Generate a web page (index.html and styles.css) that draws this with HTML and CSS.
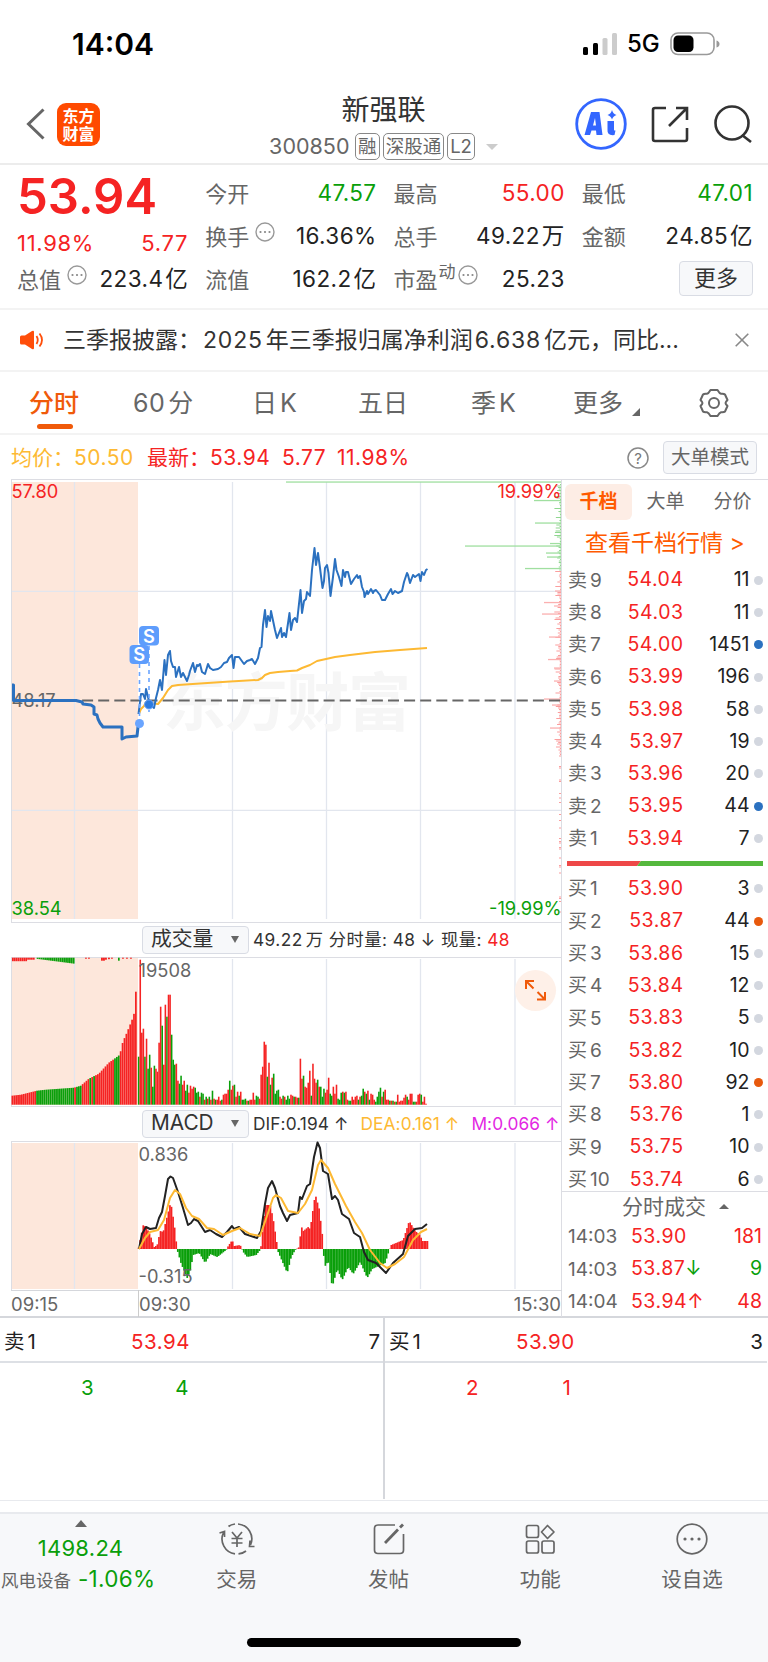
FILE: index.html
```html
<!DOCTYPE html>
<html lang="zh-CN">
<head>
  <meta charset="UTF-8">
  <meta name="viewport" content="width=device-width, initial-scale=1.0">
  <title>新强联 300850</title>
  <link rel="stylesheet" href="styles.css">
</head>
<body>
  <div class="status">
    <span class="clock">14:04</span>
    <div class="status-right">
      <svg width="34" height="24" viewBox="0 0 34 24">
        <rect x="0" y="15" width="5" height="8" rx="1.5"/>
        <rect x="10" y="11" width="5" height="12" rx="1.5"/>
        <rect x="19.500" y="6" width="5" height="17" rx="1.500" fill="#ccc"/>
        <rect x="29" y="1" width="5" height="22" rx="1.5" fill="#ccc"/>
      </svg>
      <span class="net">5G</span>
      <svg width="50" height="24" viewBox="0 0 50 24">
        <rect x="1" y="1" width="43" height="21.500" rx="7" fill="none" stroke="#999" stroke-width="1.600"/>
        <rect x="3.500" y="3.500" width="20" height="16.500" rx="4.500"/>
        <path d="M46.500 8.500 Q49.500 9.500 49.500 12 T46.500 15.500Z" fill="#999"/>
      </svg>
    </div>
  </div>

  <div class="header">
    <svg class="back" width="20" height="32" viewBox="0 0 20 32"><path d="M17.500 1.500 L2.500 16 L17.500 30.500" fill="none" stroke="#666" stroke-width="3"/></svg>
    <div class="logo">东方<br>财富</div>
    <div class="title">
      <h1>新强联</h1>
      <div class="sub">
        <span class="code">300850</span>
        <span class="tag">融</span><span class="tag">深股通</span><span class="tag">L2</span>
        <i class="caret"></i>
      </div>
    </div>
    <div class="tools">
      <svg width="52" height="52" viewBox="0 0 52 52" fill="#36f">
        <circle cx="26" cy="26" r="24.300" fill="none" stroke="#36f" stroke-width="2.800"/>
        <path d="M16 14 H24.500 L27.500 37 H21.500 L21 32.500 H16.500 L15 37 H9.500 Z M20 20 L18 27.500 H21 Z" fill-rule="evenodd"/>
        <path d="M32.500 23 H39 V31 Q38.500 33 40.500 32.500 L39.500 37 Q32 38 32.500 32 Z M37 12 Q38 16 41.500 17 Q38 18 37 21.500 Q36 18 32.500 17 Q36 16 37 12Z"/>
      </svg>
      <svg width="38" height="38" viewBox="0 0 38 38" fill="none" stroke="#333" stroke-width="2.600">
        <path d="M15 3 H4 Q2 3 2 5 V34 Q2 36 4 36 H34 Q36 36 36 34 V23 M25 3 H36 V15 M36 3 L18 21"/>
      </svg>
      <svg width="40" height="40" viewBox="0 0 40 40" fill="none" stroke="#333" stroke-width="2.600">
        <circle cx="19" cy="19" r="16.500"/><path d="M29 31 L38 38"/>
      </svg>
    </div>
  </div>

  <div class="quote">
    <div class="col">
      <div class="price">53.94</div>
      <div class="pair change"><span>11.98%</span><span>5.77</span></div>
      <div class="pair"><label>总值<svg class="dots"><use href="#dots"/></svg></label><b>223.4<u>亿</u></b></div>
    </div>
    <div class="col">
      <div class="pair"><label>今开</label><b class="down">47.57</b></div>
      <div class="pair"><label>换手<svg class="dots"><use href="#dots"/></svg></label><b>16.36%</b></div>
      <div class="pair"><label>流值</label><b>162.2<u>亿</u></b></div>
    </div>
    <div class="col">
      <div class="pair"><label>最高</label><b class="up">55.00</b></div>
      <div class="pair"><label>总手</label><b>49.22<u>万</u></b></div>
      <div class="pair"><label>市盈<small>动</small><svg class="dots"><use href="#dots"/></svg></label><b>25.23</b></div>
    </div>
    <div class="col">
      <div class="pair"><label>最低</label><b class="down">47.01</b></div>
      <div class="pair"><label>金额</label><b>24.85<u>亿</u></b></div>
      <div class="pair end"><button class="more">更多</button></div>
    </div>
  </div>

  <div class="news">
    <svg width="24" height="20" viewBox="0 0 24 20">
      <path d="M0 7 Q0 5.500 1.500 5.500 H5 L12 1 Q14 0 14 2 V18 Q14 20 12 19 L5 14.500 H1.500 Q0 14.500 0 13Z" fill="#ff4e0a"/>
      <path d="M16.500 6 Q19 10 16.500 14 M19.500 3.500 Q24.500 10 19.500 16.500" fill="none" stroke="#ff4e0a" stroke-width="1.800"/>
    </svg>
    <p>三季报披露：<span>2025</span><u>年三季报归属净利润</u><span>6.638</span><u>亿元，同比...</u></p>
    <svg width="14" height="14" viewBox="0 0 14 14"><path d="M.7 .7 L13.300 13.300 M13.300 .7 L.7 13.300" stroke="#888" stroke-width="1.600"/></svg>
  </div>

  <div class="tabs">
    <span class="active">分时</span>
    <span>60<u>分</u></span>
    <span>日<u>K</u></span>
    <span>五日</span>
    <span>季<u>K</u></span>
    <span>更多<i class="corner"></i></span>
    <svg width="30" height="30" viewBox="0 0 30 30" fill="none" stroke="#666" stroke-width="2">
      <path d="M11.500 2 H18.500 Q20.500 5.500 22 5.800 Q25 5.500 26 6.500 L28.500 12 Q26.500 14 26.500 15 T28.500 18 L26 23.500 Q25 24.500 22 24.200 Q20.500 24.500 18.500 28 H11.500 Q9.500 24.500 8 24.200 Q5 24.500 4 23.500 L1.500 18 Q3.500 16 3.500 15 T1.500 12 L4 6.500 Q5 5.500 8 5.800 Q9.500 5.500 11.500 2Z" stroke-linejoin="round"/>
      <circle cx="15" cy="15" r="5"/>
    </svg>
  </div>

  <div class="latest">
    <span class="avg">均价：</span><span class="avg n1">50.50</span>
    <span class="up">最新：</span><span class="up n2">53.94</span><span class="up n3">5.77</span><span class="up n4">11.98%</span>
    <svg class="help" width="22" height="22" viewBox="0 0 22 22"><circle cx="11" cy="11" r="10" fill="none" stroke="#888" stroke-width="1.500"/><text x="11" y="16.500" text-anchor="middle" font-size="15" fill="#777">?</text></svg>
    <button class="mode">大单模式</button>
  </div>

  <div class="market">
    <div class="charts">
      <svg class="chart" width="551" height="443" viewBox="11 479 551 443">
        <rect x="11" y="482" width="127" height="437" fill="#fde7db"/>
        <path class="grid" d="M74.500 482V919 M232.500 482V919 M326.500 482V919 M420.500 482V919 M515 482V919 M11 591.300H561 M11 810.300H561"/>
        <path class="frame" d="M11.500 479V922"/>
        <text class="watermark" x="163" y="725" textLength="248" lengthAdjust="spacing">东方财富</text>
        <g id="depth"></g>
        <text class="grey" x="11.500" y="706.500">48.17</text>
        <path d="M66 700.500H561" stroke="#666" stroke-width="2" stroke-dasharray="11 5.100" fill="none"/>
        <path class="avg-line" d="M139 714L141 709 144 706 146 702 150 703 158 704 163 698 168 690 172 686 178 685 200 683.500 230 681.500 258 680 262 678 265 675 270 673 278 672 290 671 297 670.500 302 668 310 665 317 661 326 659 335 657 350 655 375 652 400 650 427 648"/>
        <path class="pre-line" d="M12 685H13.500V700.500H76L82 702 83 704 91 705 94 707V714L97 715 98 719 100 723 103 727H122V739L126 737 137 736 138 727"/>
        <path class="price-line" d="M138.500 714L140 702 141 694 143 694 145 699 146 689 148 697 150 705 154 708 156 698 158 690 160 680 162 690 164.500 660 166 675 168 655 170 651 171 661 173 667 175 667 176 677 179 667 181 677 183 673 187 681 189 675 190 671 193 663 195 672 197 665 198 666 200 664 202 672 205 674 208 664 210 668 213 670 218 669 221 667 224 663 227 662 229 658 232 655 233.500 668 235 657 239 657 244 664 247 661 250 660 252 659 255 664 258 658 260 648 261.500 647 263 625 265 610 266.500 627 268 616 270 621 271 611 275 630 277 638 281 628 282 637 284 633 286 637 289.500 613 291 630 293 620 295 618 297 622 300.500 590 302 613 304 601 306 599 307 592 310 596 312 570 314.500 548 316 565 318 553 320 568 322.500 588 324 581 325 568 327 565 328.500 573 330.500 596 333 577 335 559 336.500 570 339 577 341.500 586 343 570 345 577 346 572 348 572 351 584 354 579 357 575 358 578 360 576 362 587 364 592 364.500 597 367 591 368 594 371 589 373 593 374 591 376 590 380 595 382 600 385 600 388 594 391 589 392.500 594 395 591 398 593 402 591 404 582 407 573 408 575 410 583 413 575 415 577 419 574 420.500 581 422 572 424 575 426 570 427.500 569"/>
        <path d="M139.500 664V723 M149 646V712" stroke="#6aa5ff" stroke-width="1.600" stroke-dasharray="4 4"/>
        <circle cx="139.500" cy="723.500" r="4.500" fill="#6aa5ff"/>
        <circle cx="149" cy="704.500" r="4.500" fill="#2c7be0" stroke="#6aa5ff"/>
        <rect x="129.500" y="645" width="19.500" height="19" rx="4" fill="#5e9dfc"/>
        <text class="mark" x="139.300" y="661.200">S</text>
        <rect x="139" y="626" width="20" height="19.500" rx="4" fill="#5e9dfc"/>
        <text class="mark" x="149" y="642.500">S</text>
        <text class="up" x="11.500" y="497.500">57.80</text>
        <text class="up" x="561.500" y="497.500" text-anchor="end">19.99%</text>
        <text class="down" x="11.500" y="915">38.54</text>
        <text class="down" x="561.500" y="915" text-anchor="end">-19.99%</text>
      </svg>

      <div class="bar vol">
        <button class="select">成交量<i></i></button>
        <span>49.22<u>万</u> 分时量: 48 ↓ 现量: <em class="up">48</em></span>
      </div>

      <svg class="chart" width="551" height="149" viewBox="11 957 551 149">
        <rect x="11" y="958" width="127" height="147" fill="#fde7db"/>
        <path class="grid" d="M74.500 959V1105 M232.500 959V1105 M326.500 959V1105 M420.500 959V1105 M515 959V1105"/>
        <path class="frame" d="M11.500 957V1106"/>
        <g id="volume"></g>
        <text class="grey" x="138.500" y="976.500">19508</text>
        <circle cx="535.500" cy="990.500" r="20.500" fill="#fef0e8"/>
        <path d="M526 989V981H534 M526.500 981.500L533.500 988.500 M545 992V999.500H537 M544.500 999L537.500 992" fill="none" stroke="#f05a0a" stroke-width="2"/>
      </svg>

      <div class="bar macd">
        <button class="select">MACD<i></i></button>
        <span>DIF:0.194 ↑</span><span class="avg">DEA:0.161 ↑</span><span class="m">M:0.066 ↑</span>
      </div>

      <svg class="chart" width="551" height="149" viewBox="11 1141 551 149">
        <rect x="11" y="1143" width="127" height="146" fill="#fde7db"/>
        <path class="grid" d="M74.500 1143V1289 M232.500 1143V1289 M326.500 1143V1289 M420.500 1143V1289 M515 1143V1289"/>
        <path class="frame" d="M11.500 1141V1290"/>
        <g id="macd"></g>
        <text class="grey" x="138.500" y="1161">0.836</text>
        <text class="grey" x="138.500" y="1283">-0.315</text>
        <path class="dif-line" d="M139 1249L142 1234 146 1227 150 1229 156 1228 159 1218 162 1212 165 1196 168 1179 170.500 1176.500 173 1178 178 1192 183 1208 188 1225 191 1223 194 1219 198 1221 205 1232 210 1230 216 1234 222 1237 227 1232 232 1226 234 1229 239 1227 245 1234 257 1238 261 1231 265 1204 268 1188 272 1181 275 1188 280 1206 283 1213 287 1221 290 1215 298 1213 300 1197 302 1199 307 1186 310 1184 314 1157 317.500 1142.500 320 1148 323 1171 328 1174 332 1199 335 1196 338 1200 342 1214 349 1219 354 1233 360 1237 364 1252 368 1260 376 1263 386 1273 393 1263 403 1254 408 1236 415 1229 422 1228 427 1224"/>
        <path class="avg-line" d="M139 1249L145 1238 150 1232 158 1230 164 1220 170 1198 175 1190 180 1194 186 1208 192 1216 199 1219 207 1228 214 1229 223 1235 232 1231 240 1228 250 1234 260 1236 267 1216 273 1198 276 1195 281 1198 288 1211 298 1213 305 1204 312 1190 318 1165 321 1160 328 1168 335 1184 346 1206 355 1222 362 1233 370 1250 380 1263 387 1268 395 1264 404 1257 413 1240 421 1232 427 1229"/>
      </svg>

      <div class="times"><span>09:15</span><span class="open">09:30</span><span class="close">15:30</span></div>
    </div>

    <div class="book">
      <div class="book-tabs"><span class="active">千档</span><span>大单</span><span>分价</span></div>
      <div class="book-link">查看千档行情 &gt;</div>
      <div id="asks"></div>
      <div class="ratio"><svg width="196" height="5" viewBox="0 0 196 5"><path d="M0 0H74L70 5H0Z" fill="#ee4848"/><path d="M74 0H196V5H70Z" fill="#55b83d"/></svg></div>
      <div id="bids"></div>
      <div class="ticks-title">分时成交<i></i></div>
      <div class="tick"><label>14:03</label><b class="up">53.90</b><span class="up">181</span></div>
      <div class="tick"><label>14:03</label><b class="up">53.87<em class="down">↓</em></b><span class="down">9</span></div>
      <div class="tick"><label>14:04</label><b class="up">53.94<em>↑</em></b><span class="up">48</span></div>
    </div>
  </div>

  <div class="queue">
    <div class="side">
      <div class="queue-head"><label>卖<u>1</u></label><b class="up">53.94</b><span>7</span></div>
      <div class="orders down"><span>3</span><span>4</span></div>
    </div>
    <div class="side">
      <div class="queue-head"><label>买<u>1</u></label><b class="up">53.90</b><span>3</span></div>
      <div class="orders up"><span>2</span><span>1</span></div>
    </div>
  </div>

  <div class="footer">
    <div class="index">
      <i></i>
      <strong>1498.24</strong>
      <p>风电设备 <span>-1.06%</span></p>
    </div>
    <div class="action">
      <svg width="36" height="36" viewBox="0 0 36 36"><path d="M4.500 11.500 A15 15 0 0 0 16 32.800 M19.500 32.900 Q24 32.500 27 30 M31.500 24 A15 15 0 0 0 19 3 M16 3 Q12 3.500 9.500 5.500 M.5 12 L5.500 10.500 V16 M35.500 25.500 L30.500 25.500 L31 19.500 M13 11 L18 17 L23 11 M18 17 V26 M12.500 17.500 H23.500 M12.500 22 H23.500"/></svg>
      <span>交易</span>
    </div>
    <div class="action">
      <svg width="36" height="36" viewBox="0 0 36 36"><path d="M24 4 H7 Q3.500 4 3.500 7.500 V29 Q3.500 32.500 7 32.500 H29 Q32.500 32.500 32.500 29 V13"/><path d="M14 22 L27 8.500" stroke-width="2.800"/><path d="M29 6.500 L32 3.500" stroke-width="2.800"/></svg>
      <span>发帖</span>
    </div>
    <div class="action">
      <svg width="36" height="36" viewBox="0 0 36 36"><rect x="4.500" y="4.500" width="12" height="12" rx="2"/><rect x="4.500" y="20" width="12" height="12" rx="2"/><rect x="20" y="20" width="12" height="12" rx="2"/><path d="M25.500 4.500 L32 11 L25.500 17.500 L19.500 11Z" stroke-linejoin="round"/></svg>
      <span>功能</span>
    </div>
    <div class="action">
      <svg width="36" height="36" viewBox="0 0 36 36"><circle cx="18" cy="18" r="14.800"/><path d="M11 18h.01 M18 18h.01 M25 18h.01" stroke-width="3.200" stroke-linecap="round"/></svg>
      <span>设自选</span>
    </div>
    <div class="home"></div>
  </div>

  <svg class="defs">
    <symbol id="dots" viewBox="0 0 20 20">
      <circle cx="10" cy="10" r="9" fill="none" stroke="#999" stroke-width="1.400"/>
      <path d="M5.500 10h.01 M10 10h.01 M14.500 10h.01" stroke="#888" stroke-width="2.200" stroke-linecap="round"/>
    </symbol>
  </svg>
  <script src="script.js"></script>
</body>
</html>
```

FILE: styles.css
```css
* {
  box-sizing: border-box;
}
body {
  margin: 0;
  width: 768px;
  background: #fff;
  color: #333;
  font-family: Inter, "Noto Sans CJK SC", sans-serif;
  font-size: 22px;
  line-height: 1;
}
h1, p {
  margin: 0;
  font-weight: 400;
}
b, em, i {
  font-weight: 400;
  font-style: normal;
}
/* gap between latin and chinese text */
u {
  margin-left: 3px;
  text-decoration: none;
}
button {
  font-family: inherit;
  line-height: 1;
  padding: 0;
  background: #f7f8fa;
  border: 1px solid #d9dce4;
  border-radius: 4px;
  color: #333;
}
svg {
  display: block;
  flex: none;
}
.defs {
  display: none;
}
.up {
  color: #f52323;
  fill: #f52323;
}
.down {
  color: #0a9f0a;
  fill: #0a9f0a;
}
.avg {
  color: #fdb933;
}

/* status bar */
.status {
  display: flex;
  justify-content: space-between;
  align-items: center;
  height: 88px;
  padding: 0 48px 0 72px;
  color: #000;
}
.clock {
  font-size: 30px;
  font-weight: 600;
}
.status-right {
  display: flex;
  align-items: center;
}
.net {
  width: 53px;
  padding-left: 10px;
  font-size: 24px;
  font-weight: 500;
}

/* header */
.header {
  display: flex;
  align-items: center;
  height: 77px;
  padding: 0 15px 3px 26px;
  border-bottom: 2px solid #ececec;
}
.logo {
  width: 43px;
  height: 43px;
  margin-left: 11px;
  padding-top: 4px;
  border-radius: 9px;
  background: #ff4a00;
  color: #fff;
  font-size: 16px;
  font-weight: 700;
  line-height: 18px;
  text-align: center;
}
.title {
  width: 285px;
  margin-left: 141px;
  text-align: center;
}
h1 {
  font-size: 28px;
  line-height: 34px;
}
.sub {
  display: flex;
  align-items: center;
  justify-content: center;
  height: 28px;
  margin: 6px 0 -5px 0;
  color: #666;
}
.code {
  width: 86px;
  text-align: left;
  font-size: 21.500px;
}
.tag {
  height: 27px;
  margin-right: 3px;
  padding: 0 2px;
  border: 1.500px solid #888;
  border-radius: 5px;
  font-size: 18.500px;
  line-height: 24px;
}
.caret {
  margin-left: 8px;
  border: 6.500px solid transparent;
  border-top-color: #ccc;
  border-bottom: 0;
}
.tools {
  display: flex;
  align-items: center;
  gap: 24px;
  margin-left: auto;
}

/* quote */
.quote {
  display: flex;
  gap: 17px;
  height: 145px;
  padding: 7px 15px 0 17px;
  border-bottom: 2px solid #f3f3f3;
}
.col {
  flex: 1;
}
.pair {
  display: flex;
  justify-content: space-between;
  align-items: center;
  height: 43px;
  white-space: nowrap;
}
.col b {
  color: #222;
  font-size: 22.500px;
  letter-spacing: .4px;
}
.col b.up {
  color: #f52323;
}
.col b.down {
  color: #0a9f0a;
}
.col u {
  margin-left: 2px;
}
.pair label {
  display: flex;
  align-items: center;
  color: #666;
}
.pair small {
  margin: -14px 1px 0 1px;
  font-size: 17px;
}
.dots {
  width: 20px;
  height: 20px;
  margin: -9px 0 0 6px;
}
small + .dots {
  margin-left: 1px;
}
.price {
  height: 48px;
  color: #f52323;
  font-size: 49px;
  font-weight: 600;
  line-height: 50px;
}
.change {
  height: 38px;
  padding-top: 7px;
  color: #f52323;
  letter-spacing: .7px;
}
.pair.end {
  justify-content: flex-end;
}
.more {
  width: 74px;
  height: 35px;
  margin-top: -3px;
  font-size: 22px;
}

/* news */
.news {
  display: flex;
  align-items: center;
  height: 62px;
  padding: 0 19px 0 20px;
  border-bottom: 2px solid #f3f3f3;
}
.news p {
  margin-left: 19px;
  font-size: 23px;
}
.news p span {
  margin-left: 2px;
  letter-spacing: .8px;
}
.news svg:last-child {
  margin-left: auto;
}

/* period tabs */
.tabs {
  display: flex;
  align-items: center;
  height: 63px;
  padding: 1px 0 0 29px;
  border-bottom: 2px solid #f3f3f3;
  color: #666;
  font-size: 25px;
}
.tabs span {
  position: relative;
  width: 104px;
}
.tabs .active {
  color: #f05a0a;
  font-weight: 500;
}
.tabs .active::after {
  content: "";
  position: absolute;
  left: 8px;
  top: 33px;
  width: 36px;
  height: 5px;
  border-radius: 3px;
  background: #f05a0a;
}
.tabs span:nth-child(2) {
  letter-spacing: .5px;
}
.tabs span:nth-child(3) {
  padding-left: 15px;
}
.tabs span:nth-child(4) {
  padding-left: 17px;
}
.tabs span:nth-child(5) {
  padding-left: 26px;
}
.tabs span:nth-child(6) {
  width: 150px;
  padding-left: 24px;
}
.corner {
  display: inline-block;
  margin-left: 9px;
  border: 4px solid #666;
  border-top-color: transparent;
  border-left-color: transparent;
  vertical-align: -4px;
}

/* latest line */
.latest {
  display: flex;
  align-items: center;
  height: 44px;
  padding: 1px 11px 0;
  font-size: 21px;
}
.n1 {
  width: 73px;
}
.n2 {
  width: 72px;
}
.n3 {
  width: 55px;
}
.n1, .n2, .n3, .n4 {
  letter-spacing: .5px;
}
.help {
  margin-left: auto;
}
.mode {
  width: 94px;
  height: 33px;
  margin-left: 14px;
  color: #666;
  font-size: 19.500px;
}

/* charts */
.market {
  display: flex;
  height: 839px;
  border-bottom: 2px solid #d5d7dc;
}
.charts {
  width: 562px;
  padding-left: 11px;
}
.chart {
  box-shadow: inset 0 1px #dcdde3, inset -1px 0 #dcdde3;
  font-size: 18.300px;
}
.grid {
  stroke: #e2e6ee;
  stroke-width: 1.300;
  fill: none;
}
.frame {
  stroke: #dcdde3;
}
.grey {
  fill: #666;
}
.watermark {
  fill: #f6f6f6;
  font-size: 63px;
  font-weight: 700;
}
.mark {
  fill: #fff;
  font-weight: 600;
  text-anchor: middle;
}
.price-line, .pre-line, .avg-line, .dif-line {
  fill: none;
  stroke: #2b71c0;
  stroke-width: 2;
  stroke-linejoin: round;
}
.pre-line {
  stroke-width: 3;
}
.avg-line {
  stroke: #fdb933;
}
.dif-line {
  stroke: #222;
}
.bar {
  display: flex;
  align-items: center;
  height: 35px;
  padding: 1px 0 0 131px;
  box-shadow: inset 0 1px #dcdde3, inset -1px 0 #dcdde3;
  font-size: 17.300px;
  white-space: nowrap;
}
.vol span {
  letter-spacing: .45px;
}
.macd span {
  letter-spacing: .1px;
}
.select {
  display: flex;
  justify-content: space-between;
  align-items: center;
  width: 107px;
  height: 28px;
  margin: -1px 4px 0 0;
  padding: 0 9px 0 8px;
  font-size: 20.800px;
}
.select i {
  border: 4px solid transparent;
  border-top: 7px solid #666;
  border-bottom: 0;
}
.macd .avg {
  margin-left: 12px;
}
.m {
  margin-left: 12px;
  color: #e327e3;
}
.times {
  display: flex;
  height: 27px;
  box-shadow: inset 0 1px #d5d7dc, inset -1px 0 #dcdde3;
  color: #666;
  font-size: 18.500px;
  line-height: 29px;
}
.times span {
  width: 127px;
}
.times .open {
  flex: 1;
  border-left: 1px solid #ccc;
}
.times .close {
  width: auto;
  padding-right: 1px;
}

/* order book */
.book {
  width: 206px;
  padding-left: 3px;
  box-shadow: inset 0 1px #dcdde3;
}
.book-tabs {
  display: flex;
  padding-top: 5px;
  color: #666;
  font-size: 19px;
  line-height: 36px;
  text-align: center;
}
.book-tabs span {
  width: 67px;
}
.book-tabs .active {
  border-radius: 6px;
  background: #fdede5;
  color: #ff5a00;
  font-weight: 700;
}
.book-link {
  height: 44px;
  padding-left: 20px;
  color: #ff5a00;
  font-size: 23px;
  line-height: 47px;
}
.level, .tick {
  display: flex;
  align-items: center;
  height: 32.300px;
  padding-left: 3px;
  font-size: 19.500px;
}
.level label, .tick label {
  width: 58px;
  color: #666;
  font-size: 19px;
}
.level b, .tick b {
  width: 57.500px;
  text-align: right;
  letter-spacing: .5px;
}
.level span {
  width: 66px;
  text-align: right;
  color: #222;
}
.level i {
  width: 9px;
  height: 9px;
  margin-left: 4px;
  border-radius: 50%;
  background: #d3d7df;
}
.level .sold {
  background: #2b71c0;
}
.level .bought {
  background: #e8590c;
}
.ratio {
  height: 18px;
  padding: 6px 0 0 2px;
}
.ticks-title {
  display: flex;
  align-items: center;
  height: 30px;
  margin: -5px 0 0 -3px;
  padding-left: 60px;
  border-top: 1px solid #dcdde3;
  color: #666;
  font-size: 21px;
}
.ticks-title i {
  margin-left: 13px;
  border: 5px solid transparent;
  border-bottom-color: #666;
  border-top: 0;
}
.tick label {
  width: 63px;
}
.tick b {
  text-align: left;
}
.tick span {
  margin-left: auto;
  padding-right: 6px;
}

/* order queue */
.queue {
  display: flex;
  height: 183px;
  border-bottom: 1px solid #e8eaee;
}
.side {
  width: 384px;
  height: 181px;
}
.side + .side {
  border-left: 2px solid #d5d7dc;
  margin-left: -1px;
}
.queue-head {
  display: flex;
  align-items: center;
  height: 45px;
  padding: 5px 4px 0;
  border-bottom: 2px solid #dde0e5;
  font-size: 20.500px;
  color: #222;
}
.queue-head label {
  width: 127px;
}
.queue-head b {
  letter-spacing: .5px;
}
.queue-head span {
  margin-left: auto;
}
.orders {
  display: flex;
  height: 50px;
  align-items: center;
  padding-left: 40px;
  font-size: 20.500px;
}
.orders span {
  width: 94.500px;
  text-align: center;
}

/* footer */
.footer {
  display: flex;
  flex-wrap: wrap;
  align-content: flex-start;
  height: 150px;
  margin-top: 11px;
  border-top: 2px solid #e8eaee;
  background: #f7f8fa;
  color: #666;
}
.index {
  width: 161px;
  height: 124px;
  color: #0a9f0a;
  text-align: center;
}
.index i {
  display: block;
  width: 0;
  margin: 6px auto 8px 75px;
  border: 6.500px solid transparent;
  border-bottom: 7px solid #666;
  border-top: 0;
}
.index strong {
  display: block;
  font-size: 22px;
  font-weight: 400;
  letter-spacing: .3px;
  line-height: 27px;
}
.index p {
  padding-left: 1px;
  color: #666;
  font-size: 17.500px;
  line-height: 34px;
  text-align: left;
  white-space: nowrap;
}
.index p span {
  margin-left: 2px;
  color: #0a9f0a;
  font-size: 22.500px;
  letter-spacing: .3px;
}
.action {
  display: flex;
  flex-direction: column;
  align-items: center;
  width: 151.700px;
  padding-top: 7px;
  gap: 13px;
  font-size: 20.500px;
}
.action svg {
  fill: none;
  stroke: #666;
  stroke-width: 1.700;
}
.home {
  width: 274px;
  height: 9px;
  margin: 0 auto;
  border-radius: 5px;
  background: #000;
}
```

FILE: script.js
```javascript
const RED = '#f52323';
const GREEN = '#0a9f0a';

function bar(x, y, w, h, fill) {
  return `<rect x="${x}" y="${y}" width="${w}" height="${h}" fill="${fill}"/>`;
}

// value of a broken line at x
function at(points, x) {
  for (let i = 1; i < points.length; i++) {
    const [x0, y0] = points[i - 1];
    const [x1, y1] = points[i];
    if (x <= x1) return y0 + (y1 - y0) * (x - x0) / (x1 - x0);
  }
  return points[points.length - 1][1];
}

// volume, one bar per minute from 09:30
const volume = 'g48 r145 r72 r76 g48 r66 g36 g50 r37 g18 g39 r36 r33 r62 r98 g79 r40 r100 g88 r110 r110 g70 g45 g40 r41 r24 g21 g29 r20 r24 g14 g20 r12 r19 r16 r18 g17 g12 g13 r8 g12 g11 r5 g8 r6 g8 r5 g14 r6 g5 r5 r8 r4 g5 r10 r11 r11 r15 g24 r15 r19 g20 r8 r13 g9 r13 g5 g5 g6 r4 g4 r5 r5 r12 r5 g9 g8 r6 r30 r38 r63 r60 g28 r42 g20 r27 g31 g11 g14 g15 r8 r6 g9 r8 g5 g9 g6 r10 r9 g8 r8 r7 g7 r46 r26 g29 r18 r17 r22 r34 g9 r41 r26 r22 g25 r18 g18 g8 g16 r12 r15 r27 g11 g9 r18 r11 r20 g6 g5 g12 r13 g12 r13 r5 g4 g4 r8 r5 r8 r9 g5 r8 g9 g16 r13 g11 r14 g5 r11 r10 r5 g3 g8 g13 g17 r8 g13 r15 r5 r5 g4 r4 g4 r3 g3 r10 r3 r4 r4 r7 r10 g8 r5 r11 r11 g3 g3 r3 r10 r11 g10 r3 r8 r1'.split(' ');
let html = volume.map((v, i) => {
  const h = Number(v.slice(1));
  return bar(137.9 + i * 1.57, 1104.7 - h, 1.57, h, v[0] === 'r' ? RED : GREEN);
}).join('');

// call auction
const auction = [[11, 9], [20, 10], [36, 14], [45, 15], [73, 17], [80, 19], [88, 26], [98, 31], [108, 42], [115, 47], [119, 50], [122, 63], [126, 72], [132, 87], [134, 94], [135, 113], [137, 113]];
const auctionGreen = [[36, 72.5], [74.5, 80], [88, 90], [92, 94], [95.500, 97], [114, 119.5]];
for (let x = 11.500; x < 136; x += 1.9) {
  const h = at(auction, x);
  const green = auctionGreen.some(([a, b]) => x >= a && x < b);
  html += bar(x, 1104.7 - h, 1.75, h, green ? GREEN : RED);
}
for (let x = 12; x < 74; x += 1.9) {
  if (x < 34) html += bar(x, 957.7, 1.75, x < 27 ? 3.500 : 2, RED);
  if (x > 35) html += bar(x, 957.7, 1.75, 1 + (x - 35) * .13, GREEN);
}
[[85, 1], [88, 1], [101, 3], [103, 3], [105, 2], [108, 1.5], [111, 1], [122, 1], [126, 1], [130, 1]].forEach(([x, h]) => {
  html += bar(x, 957.7, 1.9, h, RED);
});
html += bar(118, 957.7, 1.7, 3, GREEN);
document.getElementById('volume').innerHTML = html;

// MACD histogram
const macd = [[138, 0], [143, 23.7], [146, 22], [150, 14], [154, 2], [157, 4], [160, 18], [163, 17], [170.5, 47], [174, 25], [176.5, 3], [177, -1], [181, -15], [187, -29], [190, -22], [193, -6], [199, -4], [205, -14], [210, -5], [217, -8], [226, -1], [228, 3], [232, 9], [234, 3], [240, 4], [243, -3], [247, -8], [256, -6], [260, -1], [261, 4], [265, 44], [270, 44], [273, 30], [276, 10], [278, -3], [287, -24], [291, -8], [295, -1], [299, 2], [301, 23], [303, 18], [308, 22], [310, 20], [315, 55], [319, 40], [322, 15], [323, -3], [325, -17], [328, -12], [332, -38], [337, -20], [342, -31], [348, -18], [353, -25], [360, -13], [367, -29], [372, -20], [385, -14], [389, -1], [391, 4], [403, 9], [409, 28], [415, 18], [420, 14], [422, 8], [429, 8]];
html = '';
for (let i = 0; i < 185; i++) {
  const x = 138.3 + i * 1.57;
  const v = at(macd, x);
  html += bar(x - .6, v > 0 ? 1249 - v : 1249, 1.7, Math.abs(v), v > 0 ? RED : GREEN);
}
document.getElementById('macd').innerHTML = html;

// pending orders along the right edge of the price chart
const depth = [[482, 275], [500.5, 27], [523, 26], [543.5, 11], [546, 96], [553, 15], [557, 14], [568.5, 36], [591, 6], [602.5, 17], [614, 19], [637, 12], [659.5, 13], [668, 7], [681, 7], [699, 17], [705, 9], [728, 11]];
html = '';
for (let y = 484; y < 915; y += 1.5) {
  const n = Math.abs(Math.sin(y * 12.9898) * 43758.5453) % 1;
  if (y > 755 && n < .75) continue;
  const w = y > 755 ? 2 : 1 + n * n * n * 6;
  html += bar(561 - w, y, w, 1, y < 570 ? '#8fd68f' : '#fb9d9d');
}
depth.forEach(([y, w]) => {
  html += bar(561 - w, y - .6, w, 1.3, y < 570 ? '#a0dfa0' : '#fbb0b0');
});
document.getElementById('depth').innerHTML = html;

// price levels
const asks = [['卖', 9, '54.04', 11], ['卖', 8, '54.03', 11], ['卖', 7, '54.00', 1451, 'sold'], ['卖', 6, '53.99', 196], ['卖', 5, '53.98', 58], ['卖', 4, '53.97', 19], ['卖', 3, '53.96', 20], ['卖', 2, '53.95', 44, 'sold'], ['卖', 1, '53.94', 7]];
const bids = [['买', 1, '53.90', 3], ['买', 2, '53.87', 44, 'bought'], ['买', 3, '53.86', 15], ['买', 4, '53.84', 12], ['买', 5, '53.83', 5], ['买', 6, '53.82', 10], ['买', 7, '53.80', 92, 'bought'], ['买', 8, '53.76', 1], ['买', 9, '53.75', 10], ['买', 10, '53.74', 6]];
function level([side, n, price, qty, flag]) {
  return `<div class="level"><label>${side}<u>${n}</u></label><b class="up">${price}</b><span>${qty}</span><i class="${flag || ''}"></i></div>`;
}
document.getElementById('asks').innerHTML = asks.map(level).join('');
document.getElementById('bids').innerHTML = bids.map(level).join('');
```
